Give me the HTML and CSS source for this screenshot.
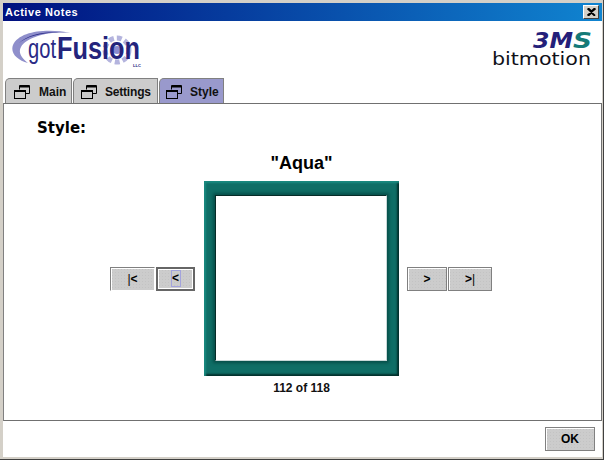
FILE: index.html
```html
<!DOCTYPE html>
<html lang="en">
<head>
    <meta charset="UTF-8">
    <meta name="viewport" content="width=device-width, initial-scale=1.0">
    <title>Active Notes</title>
    <link rel="stylesheet" href="styles.css">
</head>
<body>
    <div class="window">
        <div class="title-bar">
            <span class="title-text">Active Notes</span>
            <button class="close-button" aria-label="Close">
                <svg width="9" height="8" viewBox="0 0 9 8"><path d="M1 0 4.500 3 8 0M1 8 4.500 5 8 8M0.500 0.500 8 7.500M8.500 0.500 0.500 7.500" fill="none" stroke="#000" stroke-width="1.6"/></svg>
            </button>
        </div>

        <div class="content">
            <header class="logo-row">
                <svg class="logo-fusion" width="135" height="44" viewBox="0 0 135 44">
                    <path d="M60 5C36 0 8 3 2 17 -1 25 6 32 17 35 10 30 7 24 10 19 16 9 38 3 60 5Z" fill="#8f8fcb"/>
                    <path d="M60 5C40 2 18 5 8 15 16 8 38 2 60 5Z" fill="#2a2a86"/>
                    <circle cx="106" cy="22" r="12" fill="none" stroke="#b4b4de" stroke-width="5" stroke-dasharray="5 3"/>
                    <circle cx="106" cy="22" r="4" fill="#8c8cd0"/>
                    <text x="17" y="30" class="logo-got" textLength="28" lengthAdjust="spacingAndGlyphs">got</text>
                    <text x="46" y="31" class="logo-big" textLength="83" lengthAdjust="spacingAndGlyphs">Fusion</text>
                    <text x="122" y="39" class="logo-llc">LLC</text>
                </svg>
                <svg class="logo-bms" width="104" height="44" viewBox="0 0 104 44">
                    <text x="43" y="20" class="logo-3m" textLength="40" lengthAdjust="spacingAndGlyphs">3M</text>
                    <text x="83" y="20" class="logo-s" textLength="19" lengthAdjust="spacingAndGlyphs">S</text>
                    <text x="2" y="37" class="logo-bit" textLength="99" lengthAdjust="spacingAndGlyphs">bitmotion</text>
                </svg>
            </header>

            <nav class="tabs">
                <div class="tab tab-main">
                    <svg class="tab-icon" width="17" height="14" viewBox="0 0 17 14"><path d="M5.500 4.500V.5H15.500V8.500H11.500" fill="none" stroke="#000"/><path d="M5 1H16V2.500H5ZM1 5.500H11V7H1Z" fill="#000"/><rect x=".5" y="5.500" width="11" height="8" fill="none" stroke="#000"/></svg>
                    Main
                </div>
                <div class="tab tab-settings">
                    <svg class="tab-icon" width="17" height="14" viewBox="0 0 17 14"><path d="M5.500 4.500V.5H15.500V8.500H11.500" fill="none" stroke="#000"/><path d="M5 1H16V2.500H5ZM1 5.500H11V7H1Z" fill="#000"/><rect x=".5" y="5.500" width="11" height="8" fill="none" stroke="#000"/></svg>
                    Settings
                </div>
                <div class="tab tab-style">
                    <svg class="tab-icon" width="17" height="14" viewBox="0 0 17 14"><path d="M5.500 4.500V.5H15.500V8.500H11.500" fill="none" stroke="#000"/><path d="M5 1H16V2.500H5ZM1 5.500H11V7H1Z" fill="#000"/><rect x=".5" y="5.500" width="11" height="8" fill="none" stroke="#000"/></svg>
                    Style
                </div>
            </nav>

            <section class="panel">
                <h2 class="panel-label">Style:</h2>
                <div class="picker">
                    <h1 class="style-name">"Aqua"</h1>
                    <div class="nav nav-left">
                        <button class="btn btn-first"><span class="bar">|</span>&lt;</button>
                        <button class="btn btn-focus"><span class="focus-ring">&lt;</span></button>
                    </div>
                    <div class="frame">
                        <div class="frame-inner"></div>
                    </div>
                    <div class="nav nav-right">
                        <button class="btn btn-next">&gt;</button>
                        <button class="btn btn-last">&gt;<span class="bar">|</span></button>
                    </div>
                    <p class="counter">112 of 118</p>
                </div>
            </section>

            <footer class="footer">
                <button class="btn btn-ok">OK</button>
            </footer>
        </div>
    </div>
</body>
</html>
```

FILE: styles.css
```css
body {
    margin: 0;
    background-color: #d4d0c8;
    font-family: "Liberation Sans", Arial, sans-serif;
}

button {
    font-family: inherit;
    padding: 0;
}

.window {
    width: 604px;
    height: 460px;
    box-sizing: border-box;
    display: flex;
    flex-direction: column;
    padding: 3px 1px 2px 3px;
    border-right: 1px solid #404040;
    border-bottom: 1px solid #404040;
    background-color: #d4d0c8;
}

.title-bar {
    height: 18px;
    flex: none;
    display: flex;
    align-items: center;
    justify-content: space-between;
    padding: 0 3px 0 2px;
    background: linear-gradient(90deg, #00107f, #1084d0);
}

.title-text {
    color: #ffffff;
    font-size: 11px;
    font-weight: bold;
    letter-spacing: 0.55px;
}

.close-button {
    width: 16px;
    height: 14px;
    display: flex;
    align-items: center;
    justify-content: center;
    background-color: #d4d0c8;
    border: 1px solid;
    border-color: #ffffff #404040 #404040 #ffffff;
}

.content {
    flex: 1;
    display: flex;
    flex-direction: column;
    min-height: 0;
    background-color: #ffffff;
}

.logo-row {
    height: 57px;
    flex: none;
    display: flex;
    justify-content: space-between;
    padding: 7px 8px 0 8px;
    box-sizing: border-box;
}

.logo-got {
    font: 27px "Liberation Sans", sans-serif;
    fill: #2a2a86;
}

.logo-big {
    font: bold 32px "Liberation Sans", sans-serif;
    fill: #24247c;
}

.logo-llc {
    font: bold 4px "Liberation Sans", sans-serif;
    fill: #24247c;
}

.logo-3m {
    font: italic bold 22px "DejaVu Sans", sans-serif;
    fill: #24207a;
}

.logo-s {
    font: italic bold 22px "DejaVu Sans", sans-serif;
    fill: #147a78;
}

.logo-bit {
    font: 17.500px "DejaVu Sans", sans-serif;
    fill: #101018;
}

.tabs {
    height: 25px;
    flex: none;
    display: flex;
    gap: 1px;
    padding-left: 2px;
}

.tab {
    display: flex;
    align-items: center;
    gap: 7px;
    box-sizing: border-box;
    padding-top: 2px;
    font-size: 12px;
    font-weight: bold;
    color: #111111;
    background-color: #cccccc;
    border: 1px solid #808080;
    border-bottom: none;
    border-top-left-radius: 5px;
}

.tab-main {
    width: 67px;
    padding-left: 8px;
    gap: 8px;
}

.tab-settings {
    width: 85px;
    padding-left: 7px;
    letter-spacing: -0.2px;
}

.tab-style {
    width: 65px;
    padding-left: 6px;
    background-color: #9999cc;
}

.panel {
    flex: 1;
    display: flex;
    flex-direction: column;
    min-height: 0;
    border: 1px solid #707070;
    border-left-color: #808080;
}

.panel-label {
    margin: 15px 0 0 33px;
    font-family: "DejaVu Sans", sans-serif;
    font-size: 15px;
    line-height: 18px;
    font-weight: bold;
    color: #000000;
}

.picker {
    display: grid;
    grid-template-columns: 200px 195px 1fr;
    margin-top: 16px;
}

.style-name {
    grid-column: 2;
    margin: 0 0 8px 0;
    font-size: 18px;
    line-height: 20px;
    font-weight: bold;
    text-align: center;
    color: #000000;
}

.nav {
    grid-row: 2;
    display: flex;
    align-items: center;
    gap: 1px;
}

.nav-left {
    grid-column: 1;
    justify-content: flex-end;
    padding-right: 9px;
}

.nav-right {
    grid-column: 3;
    padding-left: 8px;
}

.btn {
    height: 24px;
    box-sizing: border-box;
    font-size: 12px;
    font-weight: bold;
    color: #000000;
    background-color: #cccccc;
    background-image: radial-gradient(#c3c3c3 0.6px, transparent 0.6px);
    background-size: 3px 3px;
    border: 1px solid #808080;
    box-shadow: inset 1px 1px 0 #ffffff;
}

.bar {
    font-weight: normal;
}

.btn-first {
    width: 45px;
    border-right-color: #ffffff;
    border-bottom-color: #ffffff;
}

.btn-focus {
    width: 39px;
    display: flex;
    align-items: center;
    justify-content: center;
    border: 2px solid #666666;
    box-shadow: inset 1px 1px 0 #ffffff, inset -1px -1px 0 #ffffff;
}

.focus-ring {
    width: 8px;
    height: 15px;
    line-height: 14px;
    border: 1px solid #a3a3dc;
}

.btn-next {
    width: 40px;
}

.btn-last {
    width: 44px;
}

.frame {
    grid-column: 2;
    grid-row: 2;
    width: 195px;
    height: 195px;
    box-sizing: border-box;
    padding: 14px 12px 15px 11px;
    background-color: #0f6e66;
    box-shadow: inset 2px 2px 2px #1a8a80, inset -2px -2px 2px #03302c;
}

.frame-inner {
    height: 100%;
    box-sizing: border-box;
    background-color: #ffffff;
    border: 1px solid;
    border-color: #062c28 #c8d8d8 #c8d8d8 #062c28;
    box-shadow: 0 0 3px 2px #064e48;
}

.counter {
    grid-column: 2;
    margin: 5px 0 0 0;
    font-size: 12px;
    line-height: 14px;
    font-weight: bold;
    text-align: center;
    color: #111111;
}

.footer {
    height: 36px;
    flex: none;
    display: flex;
    justify-content: flex-end;
    align-items: flex-start;
    padding: 6px 7px 0 0;
    box-sizing: border-box;
}

.btn-ok {
    width: 50px;
    height: 24px;
}
```
